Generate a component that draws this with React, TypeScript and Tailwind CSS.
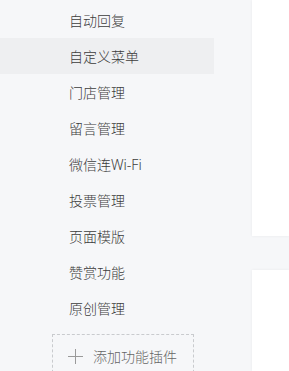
import React from 'react'

const items = ['自动回复', '自定义菜单', '门店管理', '留言管理', '微信连Wi-Fi', '投票管理', '页面模版', '赞赏功能', '原创管理']

export default function App() {
  return (
    <div
      className="flex h-[371px] w-[289px] overflow-hidden bg-[#f6f7f9]"
      style={{ fontFamily: '"Microsoft YaHei", "Noto Sans", "Noto Sans CJK SC", sans-serif' }}
    >
      <aside className="w-[252px] shrink-0 pt-[2px]">
        <ul className="w-[214px]">
          {items.map((name, i) => (
            <li
              key={name}
              className={`flex h-[36px] items-center pl-[69px] text-[14px] font-light text-[#3c3c3c] ${i === 1 ? 'bg-[#eeeff1]' : ''}`}
            >
              {name}
            </li>
          ))}
        </ul>
        <div className="ml-[52px] mt-[8px] flex h-[44px] w-[142px] items-center border border-dashed border-[#c9cbce] pl-[15px] text-[14px] font-light text-[#666]">
          <svg className="h-[15px] w-[15px]" viewBox="0 0 15 15" fill="none" stroke="#9a9a9a" strokeWidth="1">
            <path d="M7.5 0v15M0 7.5h15" />
          </svg>
          <span className="ml-[10px]">添加功能插件</span>
        </div>
      </aside>
      <main className="flex flex-1 flex-col gap-[34px]">
        <div className="h-[236px] bg-white shadow-[0_0_3px_rgba(0,0,0,0.06)]" />
        <div className="flex-1 bg-white shadow-[0_0_3px_rgba(0,0,0,0.06)]" />
      </main>
    </div>
  )
}
